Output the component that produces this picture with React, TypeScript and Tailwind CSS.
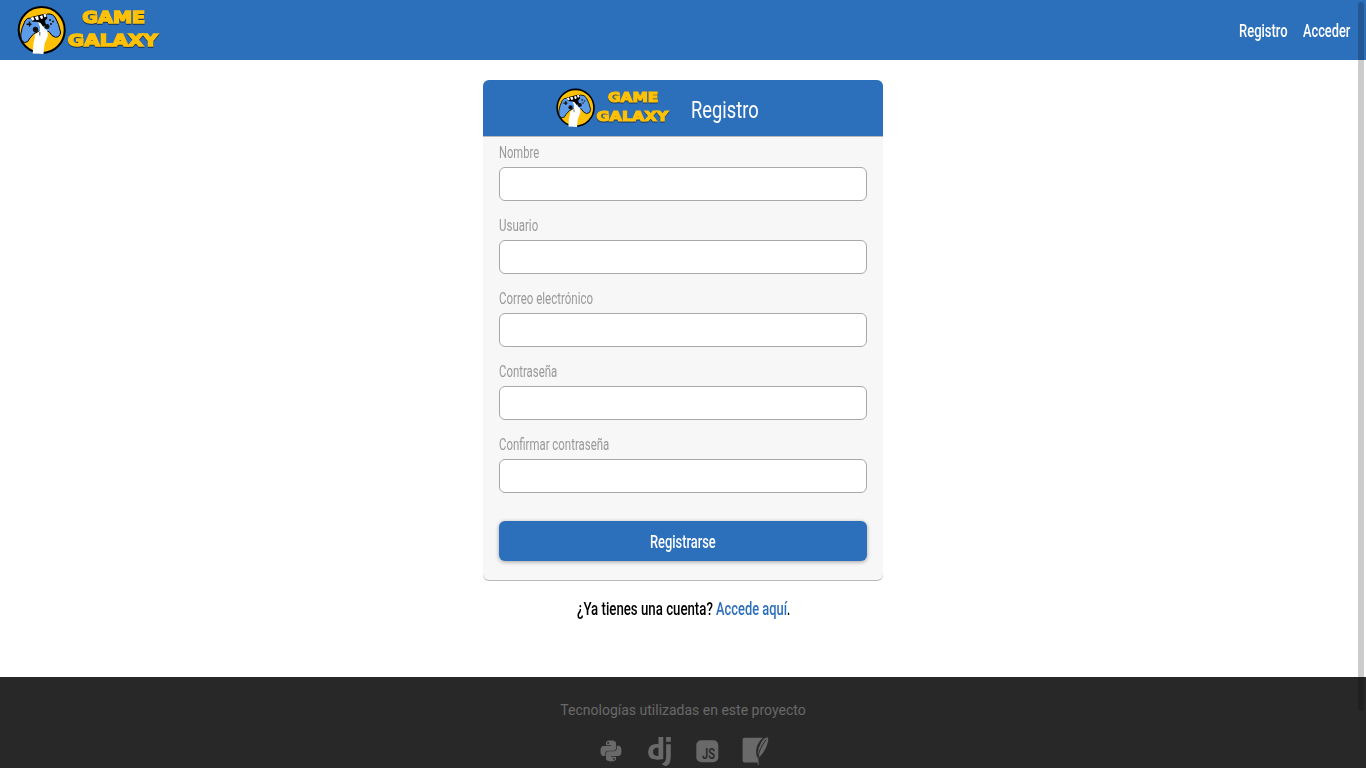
import { useLayoutEffect, useRef, useState } from 'react';
import { BiLogoDjango, BiLogoPython } from 'react-icons/bi';

/** Condensed text: squeezes its line to the given width. */
function Condensed({ text, width, className = '' }: { text: string; width: number; className?: string }) {
  const ref = useRef<HTMLSpanElement>(null);
  const [scale, setScale] = useState(1);
  useLayoutEffect(() => {
    if (ref.current) setScale(width / ref.current.offsetWidth);
  }, [width, text]);
  return (
    <span className="inline-block overflow-visible whitespace-nowrap align-top" style={{ width }}>
      <span ref={ref} className={`inline-block origin-left ${className}`} style={{ transform: `scaleX(${scale})` }}>
        {text}
      </span>
    </span>
  );
}

function Logo({ className }: { className: string }) {
  return (
    <svg viewBox="16 4 144 52" className={className} aria-label="Game Galaxy">
      <circle cx="41.7" cy="30" r="23" fill="#ffc107" stroke="#000" strokeWidth="2" />
      <path
        d="M31 18 Q27 17.500 25 21 Q21.500 28 20.800 34 Q20.500 41 24.500 42.500 Q28 43 30 38 L34 33.500 L40 31 L49 31.500 Q51.500 36.500 55.500 37.300 Q60.500 37 60.500 32 Q59 24 55.500 18 Q53 13.500 47.500 14 L44 17 Z"
        fill="#5c9bea"
        stroke="#000"
        strokeWidth="1"
        strokeLinejoin="round"
      />
      <path d="M31 17 L45.500 13.500 L47.500 18 L45 21 L46 25 L42 27 L38 22 L32 21.500 Z" fill="#000" />
      <path d="M30.500 18l2.700-1.200 1.300 3-2.100 1zM34.700 17.100l3.300-1 .9 3.300-2.300.8zM39.600 16.200l2.700-1 .9 3-2.100.8zM43.300 14.600l2.400-.8.700 2.800-1.800.8z" fill="#fff" />
      <path d="M38 22 L40.500 23 L44.500 28.500 L47.500 31 L47.800 36 L44.500 44 L43.500 54 L32.700 53.500 L33.500 43 L34.800 38 L35 34.500 L39.800 31 L40 27 Z" fill="#fff" />
      <circle cx="35.500" cy="29.500" r="2.700" fill="#111" />
      <circle cx="47" cy="26.500" r="2.500" fill="#111" />
      <path d="M39.800 32v3.500" stroke="#222" strokeWidth=".8" />
      <path d="M26.500 24.200h5M29.500 21.500v5M49 20h2M52 21.500h2M50 24h2" stroke="#111" strokeWidth="1.500" />
      <g
        className="[filter:drop-shadow(.5px_1px_.7px_rgba(0,0,0,.55))]"
        fill="#ffc107"
        stroke="#ffc107"
        strokeWidth="1.5"
        strokeLinejoin="miter"
        fontFamily="DejaVu Sans, sans-serif"
        fontWeight="700"
        fontSize="16.500"
      >
        <text x="82.200" y="22.500" textLength="63" lengthAdjust="spacingAndGlyphs">GAME</text>
        <text x="67.800" y="46.400" textLength="90" lengthAdjust="spacingAndGlyphs">GALAXY</text>
      </g>
    </svg>
  );
}

function JsIcon() {
  return (
    <svg viewBox="0 0 28 30" className="h-[30px] w-7">
      <rect x="3.300" y="4.300" width="22" height="22" rx="5" fill="currentColor" />
      <text x="9" y="22.800" fill="#282828" fontFamily="Roboto, sans-serif" fontWeight="600" fontSize="14.500" textLength="13" lengthAdjust="spacingAndGlyphs">
        JS
      </text>
    </svg>
  );
}

function SqliteIcon() {
  return (
    <svg viewBox="-1 0 28 30" className="h-[30px] w-7">
      <path d="M2.500 1.800H21Q16 6 14.500 12Q13.500 18 15.500 22L16.300 26.500H2.500Q.6 26.500.6 24.600V3.700Q.6 1.800 2.500 1.800Z" fill="currentColor" />
      <path d="M26 .8Q22.500.5 19 6Q15.500 12 15.400 17.500L16 22Q20.800 19.500 24 12.500Q27.800 4.500 26 .8Z" fill="currentColor" stroke="#282828" strokeWidth=".8" />
      <path d="M24.300 3.500Q17 12.500 15.900 22" fill="none" stroke="#282828" strokeWidth="1" />
      <path d="M15.800 21L16.300 29" fill="none" stroke="currentColor" strokeWidth=".9" />
    </svg>
  );
}

const fields = [
  { label: 'Nombre', width: 40, type: 'text' },
  { label: 'Usuario', width: 39, type: 'text' },
  { label: 'Correo electrónico', width: 94, type: 'email' },
  { label: 'Contraseña', width: 58, type: 'password' },
  { label: 'Confirmar contraseña', width: 110, type: 'password' },
];

export default function App() {
  return (
    <div className="relative flex h-screen flex-col overflow-hidden bg-white font-['Roboto',sans-serif] text-black">
      <header className="flex h-[60px] shrink-0 items-center justify-between bg-[#2c6fba] px-4">
        <Logo className="h-[52px] w-36" />
        <nav className="flex gap-4 pt-px text-[18.5px] leading-[24px] font-medium text-white">
          <a href="#"><Condensed text="Registro" width={48.5} /></a>
          <a href="#"><Condensed text="Acceder" width={47} /></a>
        </nav>
      </header>

      <main className="flex h-[617px] shrink-0 flex-col items-center pt-5">
        <form className="h-[500px] w-[400px] rounded-md bg-[#f7f7f7] shadow-[0_1px_0_#b9b9b9]">
          <div className="flex h-14 items-center rounded-t-md bg-[#2c6fba] pl-[72px] shadow-[0_1px_0_#b9b9b9]">
            <Logo className="h-[41.6px] w-[115.2px]" />
            <h1 className="ml-[21px] pt-1 text-[24.5px] leading-8 text-white"><Condensed text="Registro" width={68} /></h1>
          </div>
          <div className="px-4 pt-1">
            {fields.map((f) => (
              <label key={f.label} className="block h-[73px] text-[16.5px] leading-[26px] text-[#999]">
                <span className="block h-[27px]"><Condensed text={f.label} width={f.width} /></span>
                <input type={f.type} className="block h-[34px] w-full rounded-md border border-[#a9a9a9] bg-white px-2 outline-none" />
              </label>
            ))}
          </div>
          <div className="px-4 pt-4">
            <button type="button" className="flex h-10 w-full items-center justify-center rounded-md bg-[#2c6fba] pt-px text-[18.5px] leading-6 font-medium text-white shadow-[0_1px_4px_rgba(0,0,0,.35)]">
              <Condensed text="Registrarse" width={66} />
            </button>
          </div>
        </form>
        <p className="mt-[17px] flex pl-px text-[18.5px] leading-[25px] font-medium">
          <Condensed text="¿Ya tienes una cuenta?" width={136} />
          <a href="#" className="ml-[3px] text-[#2c6fba]"><Condensed text="Accede aquí" width={71} /></a>
          <Condensed text="." width={3} />
        </p>
      </main>

      <footer className="flex flex-1 flex-col items-center bg-[#282828] pt-[23px] text-[#696969]">
        <p className="text-sm leading-5">Tecnologías utilizadas en este proyecto</p>
        <div className="mt-4 flex h-[30px] items-center gap-5">
          <BiLogoPython size={28} />
          <BiLogoDjango size={35} className="-mx-[3.5px]" />
          <JsIcon />
          <SqliteIcon />
        </div>
      </footer>
      <div className="absolute top-0.5 right-0.5 h-[709px] w-1.5 rounded-full bg-black/20" />
    </div>
  );
}
